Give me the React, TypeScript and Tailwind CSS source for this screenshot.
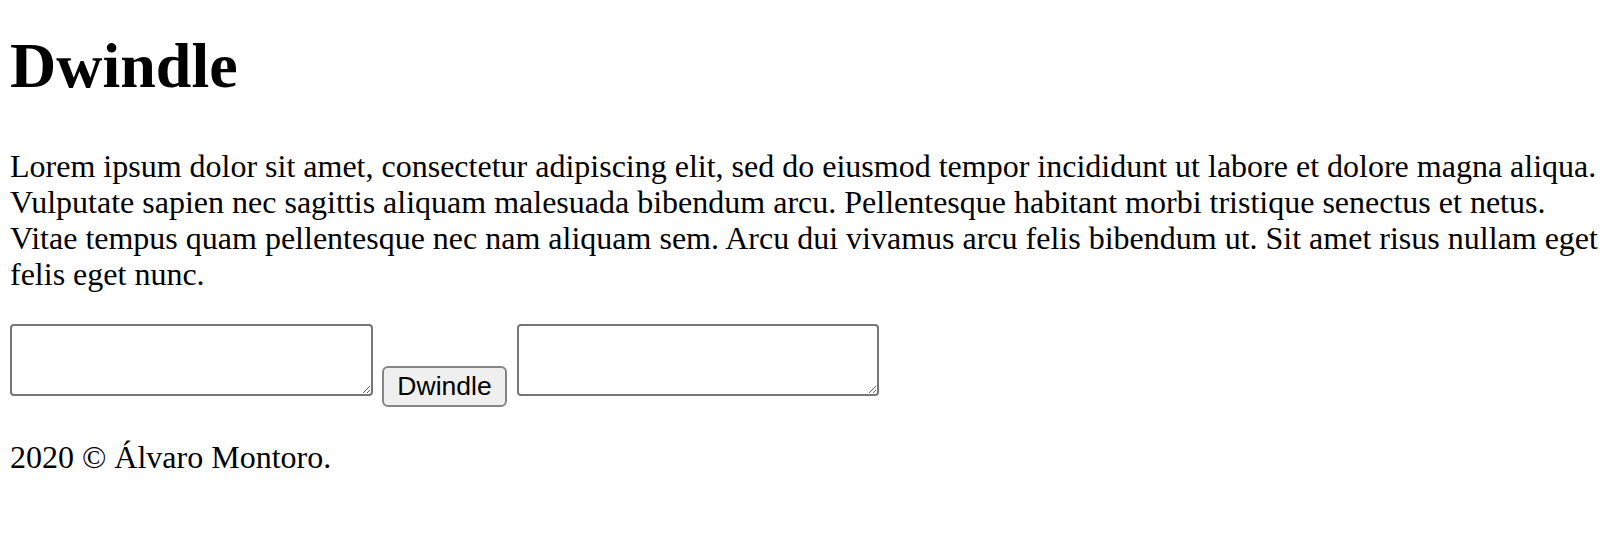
export default function App() {
  return (
    <div className="min-h-screen bg-white pl-[10px] pr-[10px] pt-[29px] text-black font-['Liberation_Serif','Times_New_Roman',serif]">
      <h1 className="text-[64px] font-bold leading-[normal]">Dwindle</h1>

      <p className="mt-[45px] text-[32px] leading-[36px]">
        Lorem ipsum dolor sit amet, consectetur adipiscing elit, sed do eiusmod tempor incididunt ut labore et dolore magna aliqua. Vulputate sapien nec sagittis aliquam malesuada bibendum arcu. Pellentesque habitant morbi tristique senectus et netus. Vitae tempus quam pellentesque nec nam aliquam sem. Arcu dui vivamus arcu felis bibendum ut. Sit amet risus nullam eget felis eget nunc.
      </p>

      <div className="mt-[32px] flex items-start">
        <textarea className="h-[72px] w-[363px] rounded-[4px] border-2 border-[#767676] bg-white" />
        <button className="ml-[9px] mt-[42px] h-[41px] w-[125px] rounded-[6px] border-2 border-[#858585] bg-[#efefef] text-[26.5px] leading-none font-['Liberation_Sans',Arial,sans-serif]">
          Dwindle
        </button>
        <textarea className="ml-[10px] h-[72px] w-[362px] rounded-[4px] border-2 border-[#767676] bg-white" />
      </div>

      <footer className="mt-[32px] text-[32px] leading-[36px]">2020 © Álvaro Montoro.</footer>
    </div>
  )
}
